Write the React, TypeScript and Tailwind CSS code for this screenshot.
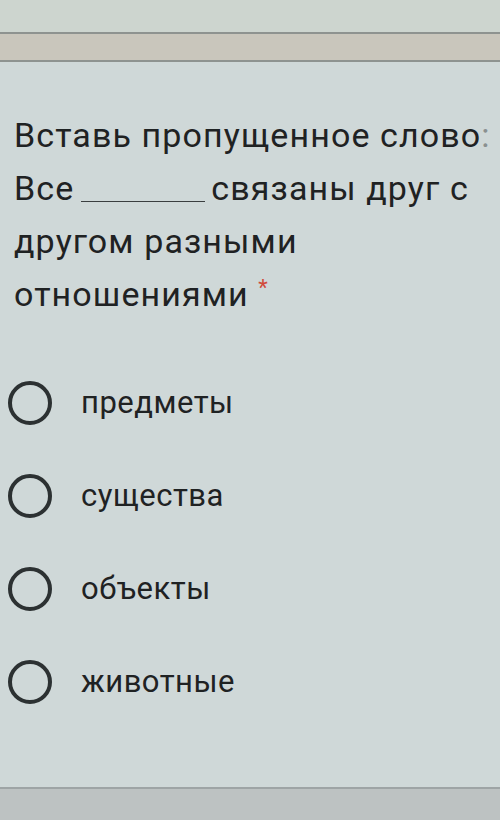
const options = ['предметы', 'существа', 'объекты', 'животные'];

function Radio() {
  return (
    <span className="block h-[44px] w-[44px] shrink-0 rounded-full border-[4px] border-[#2c3132]" />
  );
}

export default function App() {
  return (
    <div
      className="flex h-[820px] w-[500px] flex-col overflow-hidden bg-[#cdd6d0] text-[#1f2223]"
      style={{ fontFamily: 'Roboto, "Noto Sans", sans-serif' }}
    >
      <div className="h-[32px] bg-[#cdd5cf]" />
      <div className="h-[30px] border-y-2 border-[#8e9390] bg-[#c9c6bc]" />

      <div className="flex flex-1 flex-col bg-[#cfd8d8] px-[14px] pt-[47px]">
        <div className="whitespace-nowrap text-[34px] leading-[53px] tracking-[1.1px]">
          <p>
            Вставь пропущенное слово<span className="text-[#8a9090]">:</span>
          </p>
          <p>
            Все
            <span className="ml-[7px] mr-[6px] inline-block w-[124px] translate-y-[2px] border-b-[1.5px] border-[#3a3e3f] align-baseline" />
            связаны друг с
          </p>
          <p>другом разными</p>
          <p>
            отношениями <span className="align-top text-[22px] leading-[40px] text-[#d14a3a]">*</span>
          </p>
        </div>

        <div className="ml-[-6px] mt-[60px] flex flex-col gap-[49px]">
          {options.map((o) => (
            <div key={o} className="flex items-center gap-[29px]">
              <Radio />
              <span className="text-[31px] leading-[44px] tracking-[0.5px]">{o}</span>
            </div>
          ))}
        </div>
      </div>

      <div className="h-[33px] border-t-2 border-[#9ea4a5] bg-[#bdc2c2]" />
    </div>
  );
}
